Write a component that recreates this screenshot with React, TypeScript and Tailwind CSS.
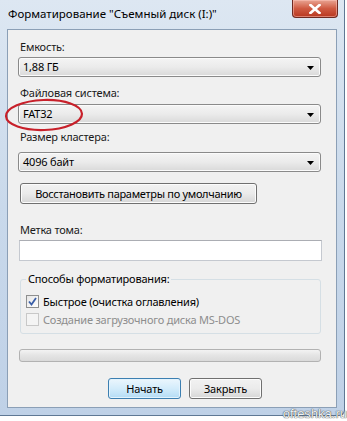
import React from "react";

const font = { fontFamily: '"Noto Sans", "Open Sans", sans-serif' };

function Arrow() {
  return (
    <svg width="7" height="4" viewBox="0 0 7 4" className="absolute right-[6px] top-[8px]">
      <path d="M0 0 H7 L3.5 4 Z" fill="#000" />
    </svg>
  );
}

function Combo({ value }: { value: string }) {
  return (
    <div className="relative w-[303px] h-[20px] rounded-[3px] border border-[#8a8a8a] bg-gradient-to-b from-[#f4f4f4] via-[#ebebeb] to-[#d9d9d9] shadow-[inset_0_0_0_1px_#fbfbfb]">
      <div className="pl-[4px] leading-[18px] text-[11px] tracking-[-0.2px] text-black whitespace-nowrap">{value}</div>
      <Arrow />
    </div>
  );
}

function Label({ children, className = "" }: { children: React.ReactNode; className?: string }) {
  return (
    <div className={`h-[16px] leading-[16px] text-[11px] tracking-[-0.2px] text-[#1a1a1a] pl-[2px] whitespace-nowrap ${className}`}>
      {children}
    </div>
  );
}

export default function App() {
  return (
    <div className="relative w-[347px] h-[421px] bg-white overflow-hidden" style={font}>
      <div className="relative w-[345px] h-[416px] rounded-br-[6px] border-r border-b border-[#5f7894] bg-gradient-to-b from-[#dde7f2] via-[#c9d9eb] to-[#bfd1e7]">
        <div className="h-[29px] pl-[8px] pt-[5px] text-[11.5px] leading-[18px] text-black whitespace-nowrap">
          Форматирование "Съемный диск (I:)"
        </div>
        <div className="absolute left-[292px] top-0 w-[46px] h-[18px] rounded-b-[4px] border border-t-0 border-[#6e2a22] bg-gradient-to-b from-[#e8a493] via-[#cf5a42] to-[#b8371f] flex items-center justify-center shadow-[inset_0_0_0_1px_rgba(255,200,190,0.5)]">
          <svg width="12" height="10" viewBox="0 0 12 10">
            <path d="M1.5 1 L10.5 9 M10.5 1 L1.5 9" stroke="#fff" strokeWidth="2.6" strokeLinecap="square" />
          </svg>
        </div>
        <div className="ml-[7px] w-[330px] h-[379px] border border-[#8b9fb6] bg-[#f0f0f0] pl-[10px] pt-[9px] flex flex-col">
          <Label>Емкость:</Label>
          <div className="mt-[2px]"><Combo value="1,88 ГБ" /></div>
          <Label className="mt-[8px]">Файловая система:</Label>
          <div className="mt-[3px]"><Combo value="FAT32" /></div>
          <Label className="mt-[5px]">Размер кластера:</Label>
          <div className="mt-[7px]"><Combo value="4096 байт" /></div>
          <div className="mt-[11px] ml-[2px] w-[237px] h-[21px] rounded-[3px] border border-[#707070] bg-gradient-to-b from-[#f2f2f2] via-[#ebebeb] to-[#d6d6d6] shadow-[inset_0_0_0_1px_#fcfcfc] text-[11px] tracking-[-0.3px] leading-[19px] text-center text-black whitespace-nowrap">
            Восстановить параметры по умолчанию
          </div>
          <Label className="mt-[18px]">Метка тома:</Label>
          <div className="mt-[2px] ml-[1px] w-[303px] h-[21px] border border-[#c5c9d0] border-t-[#abadb3] bg-white" />
          <div className="relative mt-[18px] ml-[2px] w-[301px] h-[55px] rounded-[3px] border border-[#d5dfe5]">
            <div className="absolute left-[5px] top-[-9px] px-[2px] bg-[#f0f0f0] text-[11px] tracking-[-0.2px] leading-[16px] text-black whitespace-nowrap">
              Способы форматирования:
            </div>
            <div className="pl-[5px] pt-[15px] flex flex-col gap-[5px]">
              <div className="flex items-center gap-[4px] h-[13px]">
                <div className="w-[13px] h-[13px] border border-[#8e8f8f] bg-gradient-to-br from-[#e6e6e6] to-white flex items-center justify-center">
                  <svg width="9" height="9" viewBox="0 0 9 9">
                    <path d="M1 4.5 L3.5 7.5 L8 1" stroke="#3a5fa8" strokeWidth="1.8" fill="none" />
                  </svg>
                </div>
                <span className="text-[11px] tracking-[-0.2px] leading-[16px] text-black whitespace-nowrap">Быстрое (очистка оглавления)</span>
              </div>
              <div className="flex items-center gap-[4px] h-[13px]">
                <div className="w-[13px] h-[13px] border border-[#c8c8c8] bg-[#f4f4f4]" />
                <span className="text-[11px] tracking-[-0.2px] leading-[16px] text-[#8d8d8d] whitespace-nowrap">Создание загрузочного диска MS-DOS</span>
              </div>
            </div>
          </div>
          <div className="mt-[15px] ml-[1px] w-[302px] h-[13px] rounded-[3px] border border-[#b2b2b2] bg-gradient-to-b from-[#f3f3f3] via-[#e4e4e4] to-[#dadada]" />
          <div className="mt-[16px] flex gap-[8px] pl-[90px]">
            <div className="w-[73px] h-[21px] rounded-[3px] border border-[#3c7fb1] bg-gradient-to-b from-[#ebf6fd] via-[#d3ecfb] to-[#b4dcf5] shadow-[inset_0_0_0_1px_#e3f3fd] text-[11px] tracking-[-0.2px] leading-[19px] text-center text-black">
              Начать
            </div>
            <div className="w-[73px] h-[21px] rounded-[3px] border border-[#707070] bg-gradient-to-b from-[#f2f2f2] via-[#ebebeb] to-[#d6d6d6] shadow-[inset_0_0_0_1px_#fcfcfc] text-[11px] tracking-[-0.2px] leading-[19px] text-center text-black">
              Закрыть
            </div>
          </div>
        </div>
      </div>
      <svg className="absolute left-[3px] top-[96px]" width="82" height="38" viewBox="0 0 82 38">
        <ellipse cx="41" cy="19" rx="38" ry="15" fill="none" stroke="#c8202a" strokeWidth="2.2" transform="rotate(-2 41 19)" />
      </svg>
      <div
        className="absolute right-0 bottom-0 text-[13px] leading-[14px] text-[#eef2f5]"
        style={{ fontFamily: '"Liberation Sans", Arial, sans-serif', textShadow: "0 0 1px #444, 0 0 1px #444" }}
      >
        ofteshka.ru
      </div>
    </div>
  );
}
